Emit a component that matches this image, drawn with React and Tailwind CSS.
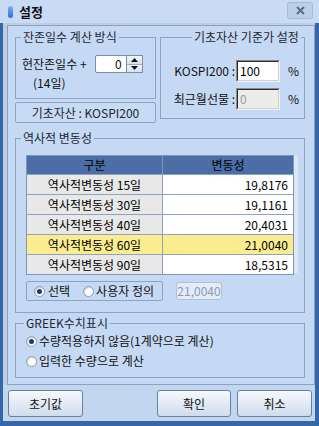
const rows = [
  { name: "역사적변동성 15일", value: "19,8176" },
  { name: "역사적변동성 30일", value: "19,1161" },
  { name: "역사적변동성 40일", value: "20,4031" },
  { name: "역사적변동성 60일", value: "21,0040", active: true },
  { name: "역사적변동성 90일", value: "18,5315" },
];

function Radio({ checked }) {
  return (
    <span className="flex h-[11px] w-[11px] items-center justify-center rounded-full border border-[#8c9cb2] bg-white shadow-[inset_1px_1px_1px_#c9d2de]">
      {checked && <span className="h-[5px] w-[5px] rounded-full bg-[#1f3a66]" />}
    </span>
  );
}

function Sunken({ value, disabled }) {
  return (
    <div className="h-[22px] w-[44px] border border-t-[#8a8a8a] border-l-[#8a8a8a] border-b-[#f4f4f4] border-r-[#f4f4f4]">
      <div
        className={
          "h-full w-full border border-t-[#2a2a2a] border-l-[#2a2a2a] border-b-[#cfcfcf] border-r-[#cfcfcf] pl-[2px] leading-[18px] " +
          (disabled ? "bg-[#ececec] text-[#9a9a9a]" : "bg-white text-black")
        }
      >
        {value}
      </div>
    </div>
  );
}

function Group({ title, className, legendClass, children }) {
  return (
    <fieldset className={"border border-[#8ea3c3] " + className}>
      <legend className={"px-[2px] leading-[14px] text-[#1e2633] " + legendClass}>{title}</legend>
      {children}
    </fieldset>
  );
}

function Button({ label, className }) {
  return (
    <button className={"flex h-[27px] items-center justify-center rounded-[3px] border border-[#6a7f9e] bg-gradient-to-b from-[#f6f9fd] to-[#cfdcee] text-[12px] text-[#111] " + className}>
      {label}
    </button>
  );
}

export default function App() {
  return (
    <div className="flex h-[426px] w-[319px] flex-col bg-[#c2d6f0] font-['Noto_Sans_CJK_KR',sans-serif] text-[12px] text-[#111]">
      {/* title bar */}
      <div className="flex h-[23px] items-center bg-[#c9dbf4]">
        <span className="ml-[8px] h-[12px] w-[5px] rounded-full bg-gradient-to-b from-[#7fb0f0] to-[#2f6fd0]" />
        <span className="ml-[6px] text-[13px] font-bold leading-none text-[#111]">설정</span>
        <div className="ml-auto mr-[6px] mb-[2px] flex h-[17px] w-[26px] items-center justify-center rounded-[2px] border border-[#a8bbd5] bg-[#bdd0ea]">
          <svg width="9" height="9" viewBox="0 0 9 9">
            <path d="M1 1 L8 8 M8 1 L1 8" stroke="#5b6f8d" strokeWidth="2" />
          </svg>
        </div>
      </div>

      <div className="flex flex-1 border-b-[5px] border-l-[3px] border-r-[4px] border-[#3466a8]">
        <div className="flex flex-1 flex-col bg-[#bccde4] pl-[4px] pt-[2px]">
          {/* main panel */}
          <div className="flex h-[360px] w-[308px] flex-col border border-[#8da2c2] bg-[#c5d9f4] pl-[7px] pr-[9px] pt-[4px]">
            <div className="flex gap-[4px]">
              <div className="flex w-[141px] flex-col">
                <Group title="잔존일수 계산 방식" className="h-[69px]" legendClass="ml-[5px]">
                  <div className="mt-[11px] flex items-center pl-[6px]">
                    <span className="leading-[14px]">현잔존일수 +</span>
                    <div className="ml-[8px] flex h-[18px]">
                      <div className="w-[32px] rounded-l-[2px] border border-[#7d8ea8] bg-white pr-[4px] text-right leading-[16px]">0</div>
                      <div className="flex w-[16px] flex-col border border-l-0 border-[#7d8ea8]">
                        <div className="flex flex-1 items-center justify-center border-b border-[#9aabc3] bg-gradient-to-b from-[#f4f7fb] to-[#d5dfec]">
                          <svg width="7" height="4" viewBox="0 0 7 4"><path d="M0 4 L3.5 0 L7 4 Z" fill="#111" /></svg>
                        </div>
                        <div className="flex flex-1 items-center justify-center bg-gradient-to-b from-[#f4f7fb] to-[#d5dfec]">
                          <svg width="7" height="4" viewBox="0 0 7 4"><path d="M0 0 L3.5 4 L7 0 Z" fill="#111" /></svg>
                        </div>
                      </div>
                    </div>
                  </div>
                  <div className="mt-[3px] pl-[17px] leading-[14px]">(14일)</div>
                </Group>
                <div className="mt-[3px] flex h-[21px] items-center justify-center rounded-[2px] border border-[#8ea3c3] bg-[#c8dbf4] text-[#1e2633]">
                  기초자산 : KOSPI200
                </div>
              </div>

              <Group title="기초자산 기준가 설정" className="h-[89px] w-[145px]" legendClass="ml-[31px]">
                <div className="mt-[16px] flex flex-col gap-[6px]">
                  <div className="flex items-center">
                    <span className="w-[74px] text-right">KOSPI200 :</span>
                    <span className="ml-[1px]"><Sunken value="100" /></span>
                    <span className="ml-[8px]">%</span>
                  </div>
                  <div className="flex items-center">
                    <span className="w-[74px] text-right">최근월선물 :</span>
                    <span className="ml-[1px]"><Sunken value="0" disabled /></span>
                    <span className="ml-[8px]">%</span>
                  </div>
                </div>
              </Group>
            </div>

            <Group title="역사적 변동성" className="mt-[8px] h-[182px]" legendClass="ml-[5px]">
              <div className="mt-[10px] flex pl-[10px]">
                <div className="w-[268px] border border-[#7f96b8]">
                  <div className="flex h-[18px] bg-[#4a6ea5] leading-[18px] text-black">
                    <div className="w-[136px] border-r border-[#7f96b8] text-center">구분</div>
                    <div className="flex-1 text-center">변동성</div>
                  </div>
                  {rows.map((r) => (
                    <div key={r.name} className="flex h-[20px] border-t border-[#8ea3c3] leading-[19px] text-black">
                      <div className={"w-[136px] border-r border-[#8ea3c3] text-center " + (r.active ? "bg-[#fbed8f]" : "bg-[#e8e8e8]")}>
                        {r.name}
                      </div>
                      <div className={"flex-1 pr-[5px] text-right " + (r.active ? "bg-[#fbed8f]" : "bg-white")}>
                        {r.value}
                      </div>
                    </div>
                  ))}
                </div>
                <div className="mt-[1px] h-[117px] w-[4px] bg-[#dde8f7]" />
              </div>

              <div className="mt-[6px] flex items-center pl-[10px]">
                <div className="flex h-[20px] w-[137px] items-center rounded-[2px] border border-[#8ea3c3] pl-[7px]">
                  <Radio checked />
                  <span className="ml-[3px]">선택</span>
                  <span className="ml-[13px]"><Radio /></span>
                  <span className="ml-[2px]">사용자 정의</span>
                </div>
                <div className="ml-[13px] flex h-[18px] w-[46px] items-center justify-center rounded-[3px] border border-[#aebfd7] bg-[#e3ecf8] text-[#8a99b0]">
                  21,0040
                </div>
              </div>
            </Group>

            <Group title="GREEK수치표시" className="mt-[3px] h-[62px]" legendClass="ml-[8px]">
              <div className="mt-[4px] flex flex-col gap-[6px] pl-[10px]">
                <div className="flex items-center leading-[14px]">
                  <Radio checked />
                  <span className="ml-[2px]">수량적용하지 않음(1계약으로 계산)</span>
                </div>
                <div className="flex items-center leading-[14px]">
                  <Radio />
                  <span className="ml-[2px]">입력한 수량으로 계산</span>
                </div>
              </div>
            </Group>
          </div>

          {/* buttons */}
          <div className="-ml-[4px] flex flex-1 bg-[#c2d6f0] pl-[4px] pt-[5px]">
            <Button label="초기값" className="ml-[1px] w-[75px]" />
            <Button label="확인" className="ml-auto w-[74px]" />
            <Button label="취소" className="ml-[6px] mr-[3px] w-[75px]" />
          </div>
        </div>
      </div>
    </div>
  );
}
